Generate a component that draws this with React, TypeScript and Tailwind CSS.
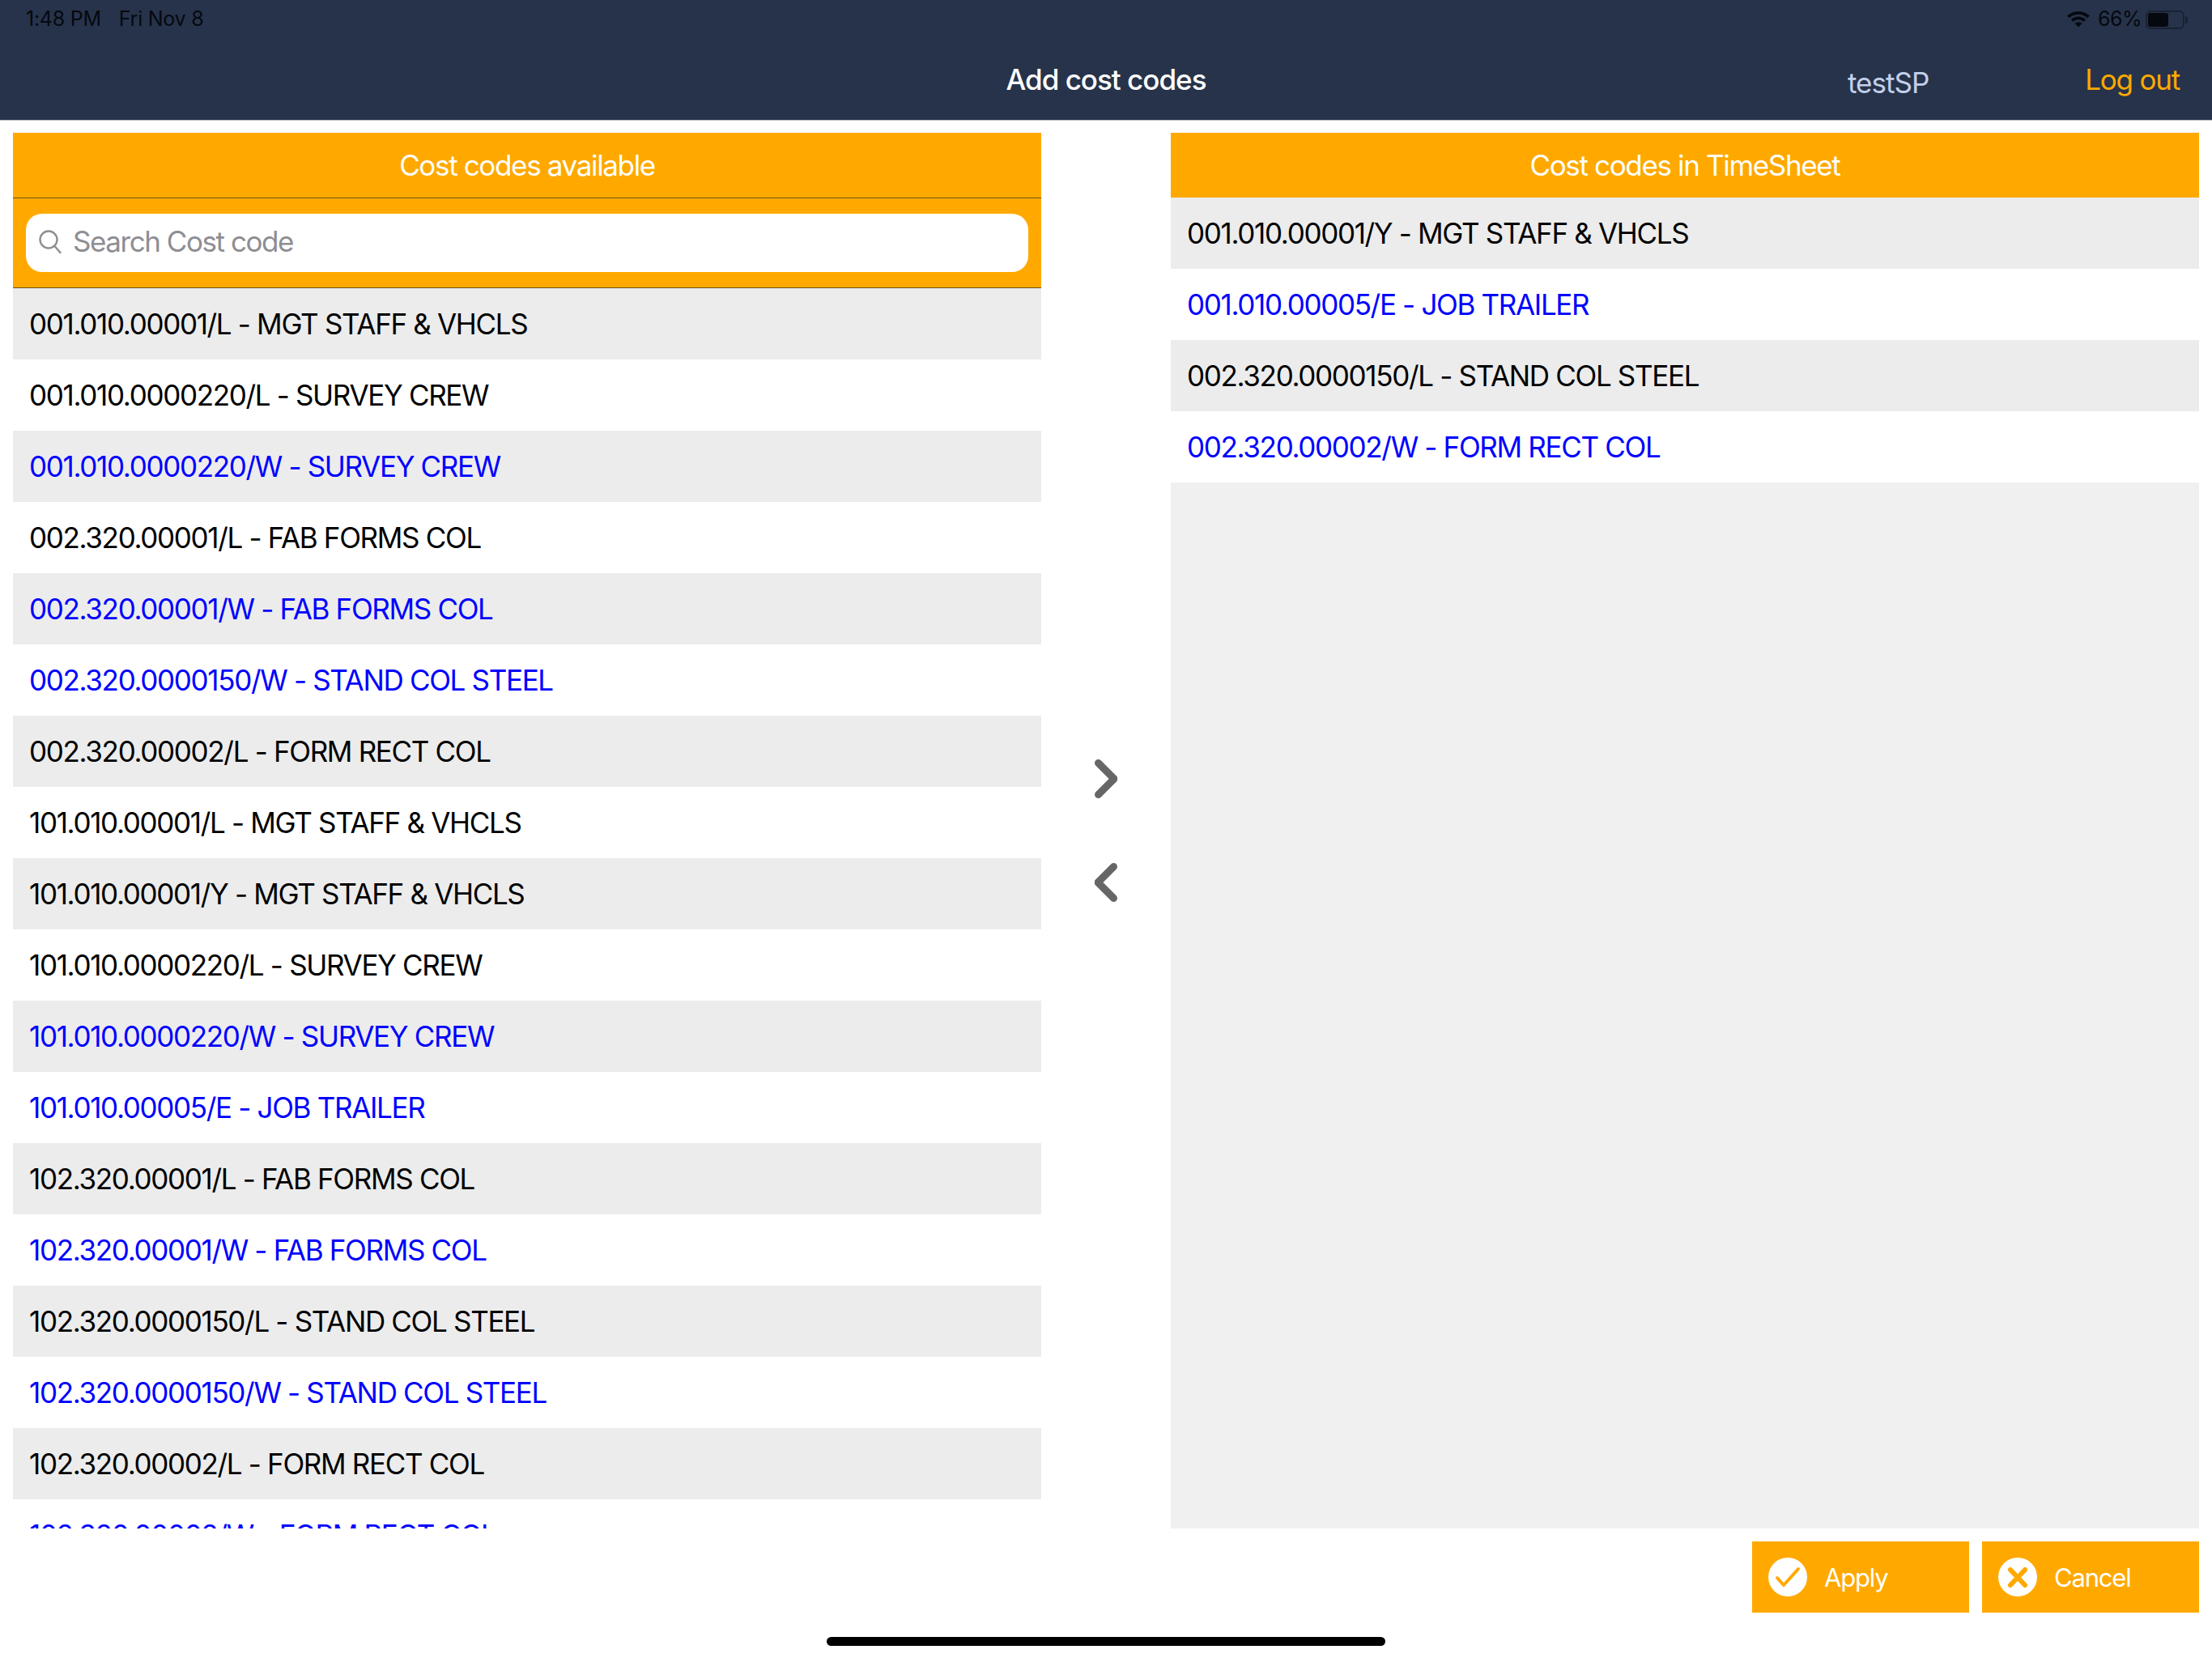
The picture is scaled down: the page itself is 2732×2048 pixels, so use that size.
const available = [
  { label: "001.010.00001/L - MGT STAFF & VHCLS", used: false },
  { label: "001.010.0000220/L - SURVEY CREW", used: false },
  { label: "001.010.0000220/W - SURVEY CREW", used: true },
  { label: "002.320.00001/L - FAB FORMS COL", used: false },
  { label: "002.320.00001/W - FAB FORMS COL", used: true },
  { label: "002.320.0000150/W - STAND COL STEEL", used: true },
  { label: "002.320.00002/L - FORM RECT COL", used: false },
  { label: "101.010.00001/L - MGT STAFF & VHCLS", used: false },
  { label: "101.010.00001/Y - MGT STAFF & VHCLS", used: false },
  { label: "101.010.0000220/L - SURVEY CREW", used: false },
  { label: "101.010.0000220/W - SURVEY CREW", used: true },
  { label: "101.010.00005/E - JOB TRAILER", used: true },
  { label: "102.320.00001/L - FAB FORMS COL", used: false },
  { label: "102.320.00001/W - FAB FORMS COL", used: true },
  { label: "102.320.0000150/L - STAND COL STEEL", used: false },
  { label: "102.320.0000150/W - STAND COL STEEL", used: true },
  { label: "102.320.00002/L - FORM RECT COL", used: false },
  { label: "102.320.00002/W - FORM RECT COL", used: true },
];

const selected = [
  { label: "001.010.00001/Y - MGT STAFF & VHCLS", used: false },
  { label: "001.010.00005/E - JOB TRAILER", used: true },
  { label: "002.320.0000150/L - STAND COL STEEL", used: false },
  { label: "002.320.00002/W - FORM RECT COL", used: true },
];

function CodeRows({ rows }: { rows: { label: string; used: boolean }[] }) {
  return (
    <>
      {rows.map((row, i) => (
        <div
          className={`flex h-[88px] shrink-0 items-center pl-5 text-[35px] tracking-[-1.33px] ${
            i % 2 === 0 ? "bg-[#ececec]" : "bg-white"
          } ${row.used ? "text-[#0000ff]" : "text-black"}`}
          key={row.label}
        >
          {row.label}
        </div>
      ))}
    </>
  );
}

export default function App() {
  return (
    <div className="relative flex h-[2048px] w-[2732px] flex-col bg-white font-['Inter','Noto_Sans',sans-serif]">
      <header className="h-[149px] shrink-0 border-b border-[#b5b8bd] bg-[#27334a]">
        <div className="flex h-[48px] items-center justify-between pl-8 pr-[30px] text-[25px] text-[#05080f]">
          <div className="flex gap-[22px] tracking-[-0.25px]">
            <span>1:48 PM</span>
            <span>Fri Nov 8</span>
          </div>
          <div className="flex items-center">
            <svg fill="#05080f" height="20" viewBox="0 0 28 20" width="28">
              <path d="M14 0C8.6 0 3.8 2.1.2 5.6l2.6 2.7C5.7 5.5 9.6 3.8 14 3.8s8.3 1.7 11.2 4.5l2.6-2.7C24.2 2.1 19.4 0 14 0z" />
              <path d="M14 6.6c-3.5 0-6.7 1.4-9 3.6l2.6 2.7c1.7-1.6 3.9-2.6 6.4-2.6s4.7 1 6.4 2.6l2.6-2.7c-2.3-2.2-5.5-3.6-9-3.6z" />
              <path d="M14 13.2c-1.7 0-3.2.7-4.4 1.7L14 19.6l4.4-4.7c-1.2-1-2.7-1.7-4.4-1.7z" />
            </svg>
            <span className="ml-[10px] mr-[5px] tracking-[-0.5px]">66%</span>
            <div className="flex items-center">
              <div className="h-[23px] w-[48px] rounded-[6px] border-2 border-[#1a2233] p-[1px]">
                <div className="h-full w-[60%] rounded-[3px] bg-[#05080f]" />
              </div>
              <div className="ml-[1px] h-[9px] w-[3px] rounded-r-[2px] bg-[#1a2233]" />
            </div>
          </div>
        </div>
        <div className="relative flex h-[100px] items-center justify-center">
          <h1 className="text-[35px] font-medium tracking-[-1px] text-white">Add cost codes</h1>
          <span className="absolute left-[2282px] top-[28px] text-[35px] tracking-[-1px] text-[#c3d0ea]">testSP</span>
          <span className="absolute right-10 top-[24px] text-[35px] tracking-[-1.2px] text-[#ffa900]">Log out</span>
        </div>
      </header>

      <main className="flex h-[1739px] shrink-0 px-4 pt-[15px]">
        <section className="flex h-full w-[1270px] flex-col">
          <div className="flex h-[81px] shrink-0 items-center justify-center border-b border-[#6e5215] bg-[#ffa900] text-[35px] tracking-[-1.35px] text-white">
            Cost codes available
          </div>
          <div className="h-[111px] shrink-0 border-b border-[#6e5215] bg-[#ffa900] px-4 pt-[19px]">
            <div className="flex h-[72px] items-center gap-[14px] rounded-[20px] bg-white pb-[4px] pl-4 text-[35px] tracking-[-1.45px] text-[#8e8e93]">
              <svg className="mt-[2px]" fill="none" height="30" stroke="#8e8e93" strokeLinecap="round" strokeWidth="2.4" viewBox="0 0 28 30" width="28">
                <circle cx="12" cy="12" r="10.5" />
                <path d="M19.5 20l7 8" />
              </svg>
              <span>Search Cost code</span>
            </div>
          </div>
          <div className="flex min-h-0 flex-1 flex-col overflow-hidden">
            <CodeRows rows={available} />
          </div>
        </section>

        <div className="flex w-[160px] shrink-0 flex-col items-center justify-center gap-[80px]">
          <svg fill="none" height="48" stroke="#666666" strokeLinecap="round" strokeLinejoin="round" strokeWidth="9" viewBox="0 0 28 48" width="28">
            <path d="M4.5 4.5L24 24L4.5 43.5" />
          </svg>
          <svg fill="none" height="48" stroke="#666666" strokeLinecap="round" strokeLinejoin="round" strokeWidth="9" viewBox="0 0 28 48" width="28">
            <path d="M23.5 4.5L4 24L23.5 43.5" />
          </svg>
        </div>

        <section className="flex h-full w-[1270px] flex-col bg-[#f0f0f0]">
          <div className="flex h-[80px] shrink-0 items-center justify-center bg-[#ffa900] text-[35px] tracking-[-1.35px] text-white">
            Cost codes in TimeSheet
          </div>
          <CodeRows rows={selected} />
        </section>
      </main>

      <footer className="flex justify-end gap-4 px-4 pt-4">
        <button className="flex h-[88px] w-[268px] items-center gap-[21px] bg-[#ffa900] pl-5 text-[31px] tracking-[-1.2px] text-white" type="button">
          <svg height="48" viewBox="0 0 48 48" width="48">
            <circle cx="24" cy="24" fill="white" r="24" />
            <path d="M11 25l8 9 18-20" fill="none" stroke="#ffa900" strokeLinecap="round" strokeLinejoin="round" strokeWidth="4" />
          </svg>
          <span className="pt-[2px]">Apply</span>
        </button>
        <button className="flex h-[88px] w-[268px] items-center gap-[21px] bg-[#ffa900] pl-5 text-[31px] tracking-[-1.2px] text-white" type="button">
          <svg height="48" viewBox="0 0 48 48" width="48">
            <circle cx="24" cy="24" fill="white" r="24" />
            <path d="M15 15l18 19M33 15L15 34" fill="none" stroke="#ffa900" strokeLinecap="round" strokeWidth="6" />
          </svg>
          <span className="pt-[2px]">Cancel</span>
        </button>
      </footer>

      <div className="absolute left-[1021px] top-[2022px] h-[11px] w-[690px] rounded-full bg-black" />
    </div>
  );
}
